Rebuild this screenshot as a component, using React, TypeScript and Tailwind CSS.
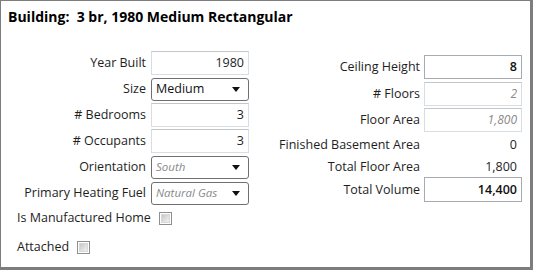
import React from "react";

const font = "font-['Open_Sans','Noto_Sans',sans-serif]";

function TextBox({ value, bold, italic, dark, h = "h-[24px]" }: { value: string; bold?: boolean; italic?: boolean; dark?: boolean; h?: string }) {
  return (
    <div
      className={`w-[98px] ${h} flex items-center justify-end pr-[4px] bg-white border ${
        dark ? "border-[#a9abb0]" : "border-[#d9dde2] border-t-[#c3c6cb]"
      } ${bold ? "font-semibold text-[#111]" : ""} ${italic ? "italic text-[#8a8a8a] text-[12px]" : "text-[#1e1e1e]"}`}
    >
      {value}
    </div>
  );
}

function Select({ value, italic }: { value: string; italic?: boolean }) {
  return (
    <div className="w-[98px] h-[23px] flex items-center justify-between pl-[4px] pr-[8px] bg-white border border-[#707070] rounded-[3px]">
      <span className={italic ? "italic text-[#8a8a8a] text-[11.5px]" : "text-[#111] text-[12.5px]"}>{value}</span>
      <svg width="8" height="5" viewBox="0 0 8 5">
        <path d="M0 0 H8 L4 5 Z" fill="#111" />
      </svg>
    </div>
  );
}

function Checkbox() {
  return (
    <div className="w-[13px] h-[13px] border border-[#8e8f8f] bg-white p-[1px]">
      <div className="w-full h-full bg-linear-to-br from-[#c8c8c8] to-[#f2f2f2] border border-[#d8d8d8]" />
    </div>
  );
}

function LRow({ label, children }: { label: string; children: React.ReactNode }) {
  return (
    <div className="h-[26px] flex items-center gap-[5px]">
      <div className="w-[145px] text-right text-[#1e1e1e] whitespace-nowrap">{label}</div>
      {children}
    </div>
  );
}

function RRow({ label, children, h }: { label: string; children: React.ReactNode; h: string }) {
  return (
    <div className={`${h} flex items-center gap-[4px]`}>
      <div className="w-[158px] text-right text-[#1e1e1e] whitespace-nowrap">{label}</div>
      {children}
    </div>
  );
}

export default function App() {
  return (
    <div className={`w-[533px] h-[270px] bg-white border-l border-t border-r-[3px] border-b-[3px] border-[#7d7d7d] ${font} text-[12.5px] leading-[16px]`}>
      <div className="pt-[7px] pl-[7px] text-[14px] leading-[17px] font-bold text-black whitespace-pre">
        {"Building:  3 br, 1980 Medium Rectangular"}
      </div>
      <div className="flex items-start">
        <div className="mt-[25px] flex flex-col">
          <LRow label="Year Built">
            <TextBox value="1980" />
          </LRow>
          <LRow label="Size">
            <Select value="Medium" />
          </LRow>
          <LRow label="# Bedrooms">
            <TextBox value="3" />
          </LRow>
          <LRow label="# Occupants">
            <TextBox value="3" />
          </LRow>
          <LRow label="Orientation">
            <Select value="South" italic />
          </LRow>
          <LRow label="Primary Heating Fuel">
            <Select value="Natural Gas" italic />
          </LRow>
          <div className="h-[24px] flex items-center gap-[8px] pl-[16px]">
            <span className="text-[#1e1e1e]">Is Manufactured Home</span>
            <Checkbox />
          </div>
          <div className="mt-[5px] h-[24px] flex items-center gap-[8px] pl-[16px]">
            <span className="text-[#1e1e1e]">Attached</span>
            <Checkbox />
          </div>
        </div>
        <div className="ml-[13px] mt-[29px] flex flex-col">
          <RRow label="Ceiling Height" h="h-[26px]">
            <TextBox value="8" bold dark />
          </RRow>
          <RRow label="# Floors" h="h-[27px]">
            <TextBox value="2" italic />
          </RRow>
          <RRow label="Floor Area" h="h-[26px]">
            <TextBox value="1,800" italic />
          </RRow>
          <RRow label="Finished Basement Area" h="h-[24px]">
            <div className="w-[98px] text-right pr-[5px] text-[#1e1e1e]">0</div>
          </RRow>
          <RRow label="Total Floor Area" h="h-[20px]">
            <div className="w-[98px] text-right pr-[5px] text-[#1e1e1e]">1,800</div>
          </RRow>
          <RRow label="Total Volume" h="h-[25px]">
            <TextBox value="14,400" bold dark h="h-[25px]" />
          </RRow>
        </div>
      </div>
    </div>
  );
}
